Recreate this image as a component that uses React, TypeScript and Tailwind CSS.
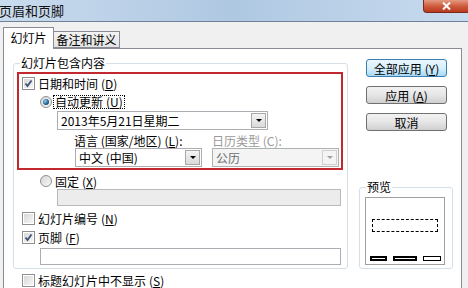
import React from 'react';

const FONT = '"Noto Sans CJK SC", "Liberation Sans", sans-serif';

const Key: React.FC<{ k: string }> = ({ k }) => (
  <span className="ml-[3px]">
    (<span className="underline underline-offset-1">{k}</span>)
  </span>
);

const CheckBox: React.FC<{ checked?: boolean }> = ({ checked }) => (
  <div className="w-[13px] h-[13px] border border-[#8e8f8f] bg-white p-px shrink-0">
    <div className="relative w-full h-full bg-gradient-to-br from-[#d8d8d8] to-[#f6f6f6]">
      {checked && (
        <svg width="11" height="11" viewBox="0 0 11 11" className="absolute inset-0 -m-px">
          <path d="M2.5 5.5 L4.5 8 L8.5 2.5" stroke="#3e4f76" strokeWidth="1.8" fill="none" />
        </svg>
      )}
    </div>
  </div>
);

const Radio: React.FC<{ checked?: boolean }> = ({ checked }) => (
  <div className="w-[12px] h-[12px] rounded-full border border-[#8e8f8f] bg-gradient-to-br from-[#d6d6d6] to-[#f8f8f8] flex items-center justify-center shrink-0">
    {checked && <div className="w-[6px] h-[6px] rounded-full bg-[radial-gradient(circle_at_35%_35%,#8fd0f2,#1b5a8a_60%,#0e3a5e)]" />}
  </div>
);

const DropBtn: React.FC<{ disabled?: boolean }> = ({ disabled }) => (
  <div
    className={`w-[15px] h-[15px] border flex items-center justify-center ${
      disabled ? 'border-[#d0d0d0] bg-[#f4f4f4]' : 'border-[#a7a7a7] bg-gradient-to-b from-[#f4f4f4] to-[#dadada]'
    }`}
  >
    <div
      className={`w-0 h-0 border-l-[3px] border-r-[3px] border-t-[3px] border-l-transparent border-r-transparent ${
        disabled ? 'border-t-[#a0a0a0]' : 'border-t-black'
      }`}
    />
  </div>
);

const Combo: React.FC<{ text: string; width: string; disabled?: boolean }> = ({ text, width, disabled }) => (
  <div
    className={`${width} h-[19px] border flex items-center justify-between pl-[3px] pr-px ${
      disabled ? 'border-[#adb2b5] bg-[#f4f4f4] text-[#6d6d6d]' : 'border-[#abadb3] bg-white text-black'
    }`}
  >
    <span className="leading-[13px]">{text}</span>
    <DropBtn disabled={disabled} />
  </div>
);

const WinButton: React.FC<{ children: React.ReactNode; primary?: boolean }> = ({ children, primary }) => (
  <div
    className={`w-[81px] h-[18px] rounded-[3px] border flex items-center justify-center leading-[13px] ${
      primary
        ? 'border-[#3c7fb1] bg-gradient-to-b from-[#eaf6fd] via-[#d9f0fc] to-[#a7d9f5]'
        : 'border-[#707070] bg-gradient-to-b from-[#f2f2f2] via-[#e6e6e6] to-[#cfcfcf]'
    }`}
  >
    {children}
  </div>
);

export default function App() {
  return (
    <div
      className="w-[468px] h-[288px] overflow-hidden bg-[#f0f0f0] text-[12px] text-black"
      style={{ fontFamily: FONT }}
    >
      {/* Title bar */}
      <div className="h-[22px] flex items-start justify-between border-b border-[#6f8196] bg-gradient-to-r from-[#c9dbee] via-[#afc8e2] to-[#c8dbef]">
        <span className="mt-[3px] -ml-px text-[13px] leading-[15px] text-[#111]">页眉和页脚</span>
        <div className="w-[45px] h-[13px] rounded-bl-[4px] border border-t-0 border-r-0 border-[#7a2a1c] bg-gradient-to-b from-[#e49a83] via-[#cf5b3d] to-[#b83a1e] flex items-center justify-center">
          <svg width="9" height="8" viewBox="0 0 9 8">
            <path d="M1 0.5 L8 7.5 M8 0.5 L1 7.5" stroke="white" strokeWidth="2" />
          </svg>
        </div>
      </div>

      {/* Tabs */}
      <div className="mt-[5px] ml-[3px] h-[21px] flex items-end">
        <div className="relative z-10 -mb-px h-[22px] w-[51px] border border-b-0 border-[#898c95] bg-white flex items-start justify-center pt-[3px] leading-[13px]">
          幻灯片
        </div>
        <div className="h-[17px] w-[67px] -ml-px border border-[#898c95] bg-gradient-to-b from-[#f3f3f3] to-[#e3e3e3] flex items-center justify-center leading-[13px]">
          备注和讲义
        </div>
      </div>

      {/* Panel */}
      <div className="ml-[3px] w-[459px] h-[260px] border border-[#898c95] bg-white flex">
        <div className="ml-[9px]">
          {/* Group: 幻灯片包含内容 */}
          <div className="relative mt-[14px] w-[335px] h-[206px] border border-[#d5dfe5] rounded-[3px]">
            <span className="absolute left-[6px] -top-[8px] bg-white px-px leading-[14px]">幻灯片包含内容</span>

            <div className="ml-[3px] mt-[8px] w-[326px] h-[98px] border-2 border-[#c3282e]">
              <div className="mt-[3px] ml-[3px] h-[13px] flex items-center gap-[3px] leading-[13px]">
                <CheckBox checked />
                <span>
                  日期和时间<Key k="D" />
                </span>
              </div>
              <div className="mt-[5px] ml-[21px] h-[14px] flex items-center gap-[1px]">
                <Radio checked />
                <span className="border border-dotted border-black px-px leading-[12px]">
                  自动更新<Key k="U" />
                </span>
              </div>
              <div className="mt-[2px] ml-[38px]">
                <Combo text="2013年5月21日星期二" width="w-[211px]" />
              </div>
              <div className="ml-[55px] mt-[4px] grid grid-cols-[138px_127px] leading-[13px]">
                <span>
                  语言 (国家/地区)<Key k="L" />:
                </span>
                <span className="text-[#9a9a9a]">日历类型 (C):</span>
              </div>
              <div className="ml-[56px] mt-[1px] flex gap-[10px]">
                <Combo text="中文 (中国)" width="w-[127px]" />
                <Combo text="公历" width="w-[127px]" disabled />
              </div>
            </div>

            <div className="mt-[5px] ml-[26px] h-[12px] flex items-center gap-[3px] leading-[13px]">
              <Radio />
              <span>
                固定<Key k="X" />
              </span>
            </div>
            <div className="mt-[2px] ml-[43px] w-[284px] h-[17px] border border-[#b9b9b9] bg-[#ececec]" />

            <div className="mt-[6px] ml-[8px] h-[13px] flex items-center gap-[3px] leading-[13px]">
              <CheckBox />
              <span>
                幻灯片编号<Key k="N" />
              </span>
            </div>
            <div className="mt-[6px] ml-[8px] h-[13px] flex items-center gap-[3px] leading-[13px]">
              <CheckBox checked />
              <span>
                页脚<Key k="F" />
              </span>
            </div>
            <div className="mt-[4px] ml-[26px] w-[301px] h-[17px] border border-[#abadb3] bg-white" />
          </div>

          <div className="mt-[5px] ml-[9px] h-[13px] flex items-center gap-[3px] leading-[13px]">
            <CheckBox />
            <span>
              标题幻灯片中不显示<Key k="S" />
            </span>
          </div>
        </div>

        {/* Right column */}
        <div className="ml-[11px] w-[94px]">
          <div className="ml-[7px] mt-[10px] flex flex-col gap-[9px]">
            <WinButton primary>
              全部应用<Key k="Y" />
            </WinButton>
            <WinButton>
              应用<Key k="A" />
            </WinButton>
            <WinButton>取消</WinButton>
          </div>

          <div className="relative mt-[56px] w-[94px] h-[82px] border border-[#d5dfe5] rounded-[3px]">
            <span className="absolute left-[6px] -top-[8px] bg-white px-px leading-[14px]">预览</span>
            <div className="ml-[5px] mt-[9px] w-[80px] h-[68px] border border-[#a0a0a0] bg-white">
              <div className="ml-[6px] mt-[21px] w-[66px] h-[13px] border border-dashed border-black" />
              <div className="mt-[24px] ml-[4px] flex gap-[6px]">
                <div className="w-[17px] h-[5px] border-2 border-black bg-white" />
                <div className="w-[24px] h-[5px] border-2 border-black bg-white" />
                <div className="w-[18px] h-[5px] border border-black bg-white" />
              </div>
            </div>
          </div>
        </div>
      </div>
    </div>
  );
}
